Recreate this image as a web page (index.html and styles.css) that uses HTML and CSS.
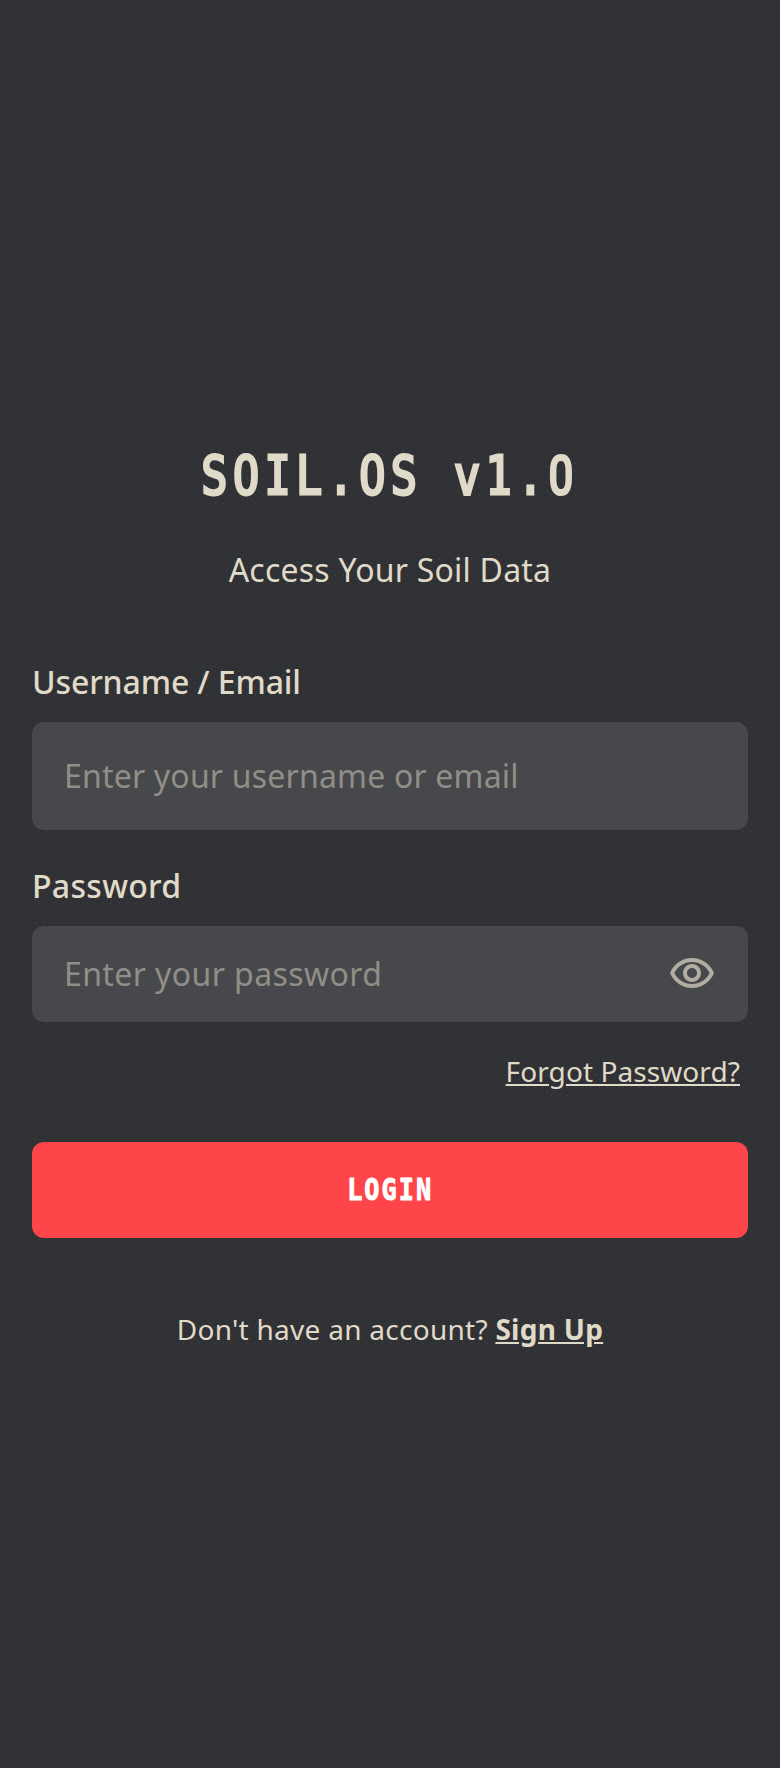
FILE: index.html
```html
<!DOCTYPE html>
<html lang="en">
<head>
<meta charset="utf-8">
<title>SOIL.OS v1.0</title>
<link rel="stylesheet" href="styles.css">
</head>
<body>
<main class="login">
  <h1 class="brand">SOIL.OS v1.<span class="zero">0</span></h1>
  <p class="tagline">Access Your Soil Data</p>
  <form class="form">
    <label class="label" for="user">Username / Email</label>
    <input class="field field-user" id="user" type="text" placeholder="Enter your username or email">
    <label class="label label-pass" for="pass">Password</label>
    <div class="field password">
      <input class="password-input" id="pass" type="password" placeholder="Enter your password">
      <svg class="eye" viewBox="0 0 24 24" fill="currentColor" aria-hidden="true"><path d="M12 6c3.79 0 7.17 2.13 8.82 5.5C19.17 14.87 15.79 17 12 17s-7.17-2.13-8.82-5.5C4.83 8.13 8.21 6 12 6m0-2C7 4 2.73 7.11 1 11.5 2.73 15.89 7 19 12 19s9.27-3.11 11-7.5C21.27 7.11 17 4 12 4zm0 5c1.38 0 2.5 1.12 2.5 2.5S13.38 14 12 14s-2.5-1.12-2.5-2.5S10.62 9 12 9m0-2c-2.48 0-4.5 2.02-4.5 4.5S9.52 16 12 16s4.5-2.02 4.5-4.5S14.48 7 12 7z"/></svg>
    </div>
    <a class="forgot">Forgot Password?</a>
    <button class="submit" type="button"><span class="submit-text">LOGIN</span></button>
  </form>
  <p class="signup">Don't have an account? <a class="signup-link">Sign Up</a></p>
</main>
</body>
</html>
```
FILE: styles.css
```css
* { box-sizing: border-box; }
body {
  margin: 0;
  min-height: 1768px;
  background-color: #303135;
  background-image: radial-gradient(circle at 3px 3px, #36373b 1px, transparent 1.5px), radial-gradient(circle at 7px 7px, #36373b 1px, transparent 1.5px);
  background-size: 8px 8px;
  color: #e0dac9;
  font: 32px/48px "Noto Sans", sans-serif;
}
.login { padding: 437px 32px 0; display: flex; flex-direction: column; }
.brand {
  margin: 0;
  height: 80px;
  text-align: center;
  font: 400 53px/78px "DejaVu Sans Mono", monospace;
  letter-spacing: 6.6px;
  -webkit-text-stroke: 3px #e0dac9;
  transform: translateX(-1px) scaleX(.82);
}
.zero { display: inline-block; width: 34px; font-family: Roboto, sans-serif; }
.tagline { margin: 29px 0 0; text-align: center; letter-spacing: .22px; }
.form { display: flex; flex-direction: column; margin-top: 64px; }
.label { font-weight: 500; margin-bottom: 16px; letter-spacing: -.12px; }
.label-pass { letter-spacing: .3px; }
.field { height: 108px; border: 0; border-radius: 12px; padding: 0 32px; background: #47484b; margin-bottom: 32px; width: 100%; }
.field, .password-input { font: inherit; color: #e0dac9; outline: 0; }
.field-user { padding-bottom: 2px; letter-spacing: .19px; }
.password { height: 96px; display: flex; align-items: center; margin-bottom: 24px; }
.password-input { flex: 1; min-width: 0; padding: 0; border: 0; background: none; letter-spacing: .4px; }
::placeholder { color: #918e87; opacity: 1; }
.eye { width: 48px; height: 48px; color: #b2ada2; }
.forgot { align-self: flex-end; margin-right: 8px; font-size: 28px; line-height: 50px; letter-spacing: .08px; text-decoration: underline; }
.submit {
  margin-top: 46px;
  height: 96px;
  border: 0;
  border-radius: 12px;
  background: #fe454a;
  color: #fff;
  font: 700 30px/92px "DejaVu Sans Mono", monospace;
  padding: 0 0 1px;
}
.submit-text { display: inline-block; letter-spacing: 2.4px; transform: scaleX(.84); -webkit-text-stroke: 1px #fff; }
.signup { margin: 71px 0 0; text-align: center; font-size: 28px; line-height: 40px; letter-spacing: .27px; }
.signup-link { font-weight: 700; text-decoration: underline; }
```
